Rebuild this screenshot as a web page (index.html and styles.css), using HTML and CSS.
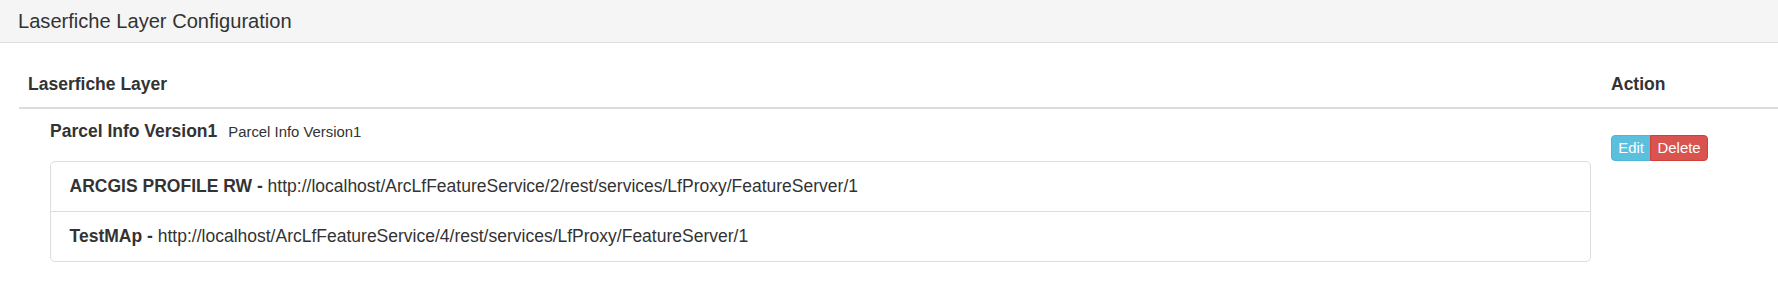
FILE: index.html
```html
<!DOCTYPE html>
<html>
<head>
<meta charset="utf-8">
<link rel="stylesheet" href="styles.css">
</head>
<body>
<div class="panel">
  <div class="panel-heading">
    <h3 class="panel-title">Laserfiche Layer Configuration</h3>
  </div>
  <div class="panel-body">
    <table class="layers">
      <thead>
        <tr>
          <th class="col-layer">Laserfiche Layer</th>
          <th class="col-action">Action</th>
        </tr>
      </thead>
      <tbody>
        <tr>
          <td class="col-layer">
            <div class="layer">
              <div class="layer-title"><strong>Parcel Info Version1</strong><small>Parcel Info Version1</small></div>
              <ul class="list-group">
                <li class="list-group-item"><strong>ARCGIS PROFILE RW - </strong>http://localhost/ArcLfFeatureService/2/rest/services/LfProxy/FeatureServer/1</li>
                <li class="list-group-item"><strong>TestMAp - </strong>http://localhost/ArcLfFeatureService/4/rest/services/LfProxy/FeatureServer/1</li>
              </ul>
            </div>
          </td>
          <td class="col-action">
            <div class="btn-group">
              <button class="btn btn-info">Edit</button><button class="btn btn-danger">Delete</button>
            </div>
          </td>
        </tr>
      </tbody>
    </table>
  </div>
</div>
</body>
</html>
```

FILE: styles.css
```css
html, body {
  margin: 0;
  padding: 0;
  background: #fff;
}
body {
  font-family: "Liberation Sans", Arial, Helvetica, sans-serif;
  font-size: 17.5px;
  line-height: 1.42857;
  color: #333;
}
.panel {
  background: #fff;
}
.panel-heading {
  background: #f5f5f5;
  border-bottom: 1px solid #ddd;
  height: 42px;
  padding: 0 18px;
  display: flex;
  align-items: center;
}
.panel-title {
  margin: 0;
  font-size: 20.1px;
  font-weight: normal;
  line-height: 1.1;
  color: #333;
}
.panel-body {
  padding: 19px 0 0 19px;
}
.layers {
  width: 100%;
  border-collapse: collapse;
  border-spacing: 0;
}
.layers th {
  text-align: left;
  font-weight: bold;
  padding: 10px 10px;
  border-bottom: 2px solid #ddd;
  vertical-align: bottom;
}
.layers td {
  vertical-align: top;
  padding: 10px 10px;
}
.layers th.col-layer {
  padding-left: 9px;
}
.layers td.col-layer {
  padding-right: 10px;
}
.col-action {
  width: 157px;
}
.layer {
  padding-left: 21px;
}
.layer-title strong {
  font-weight: bold;
}
.layer-title small {
  font-size: 85%;
  margin-left: 11px;
}
.list-group {
  list-style: none;
  margin: 17px 0 18px 0;
  padding: 0;
}
.list-group-item {
  border: 1px solid #ddd;
  padding: 12px 18.6px;
  margin-bottom: -1px;
  background: #fff;
}
.list-group-item:first-child {
  border-top-left-radius: 5px;
  border-top-right-radius: 5px;
}
.list-group-item:last-child {
  margin-bottom: 0;
  border-bottom-left-radius: 5px;
  border-bottom-right-radius: 5px;
}
.btn-group {
  display: inline-flex;
  margin-top: 16px;
}
.btn {
  font-family: inherit;
  font-size: 14.9px;
  line-height: 1.5;
  padding: 1px 6.3px;
  border: 1px solid transparent;
  color: #fff;
  cursor: pointer;
  margin: 0;
}
.btn-info {
  background: #5bc0de;
  border-color: #46b8da;
  border-radius: 4px 0 0 4px;
}
.btn-danger {
  background: #d9534f;
  border-color: #d43f3a;
  border-radius: 0 4px 4px 0;
  margin-left: -1px;
}
```
